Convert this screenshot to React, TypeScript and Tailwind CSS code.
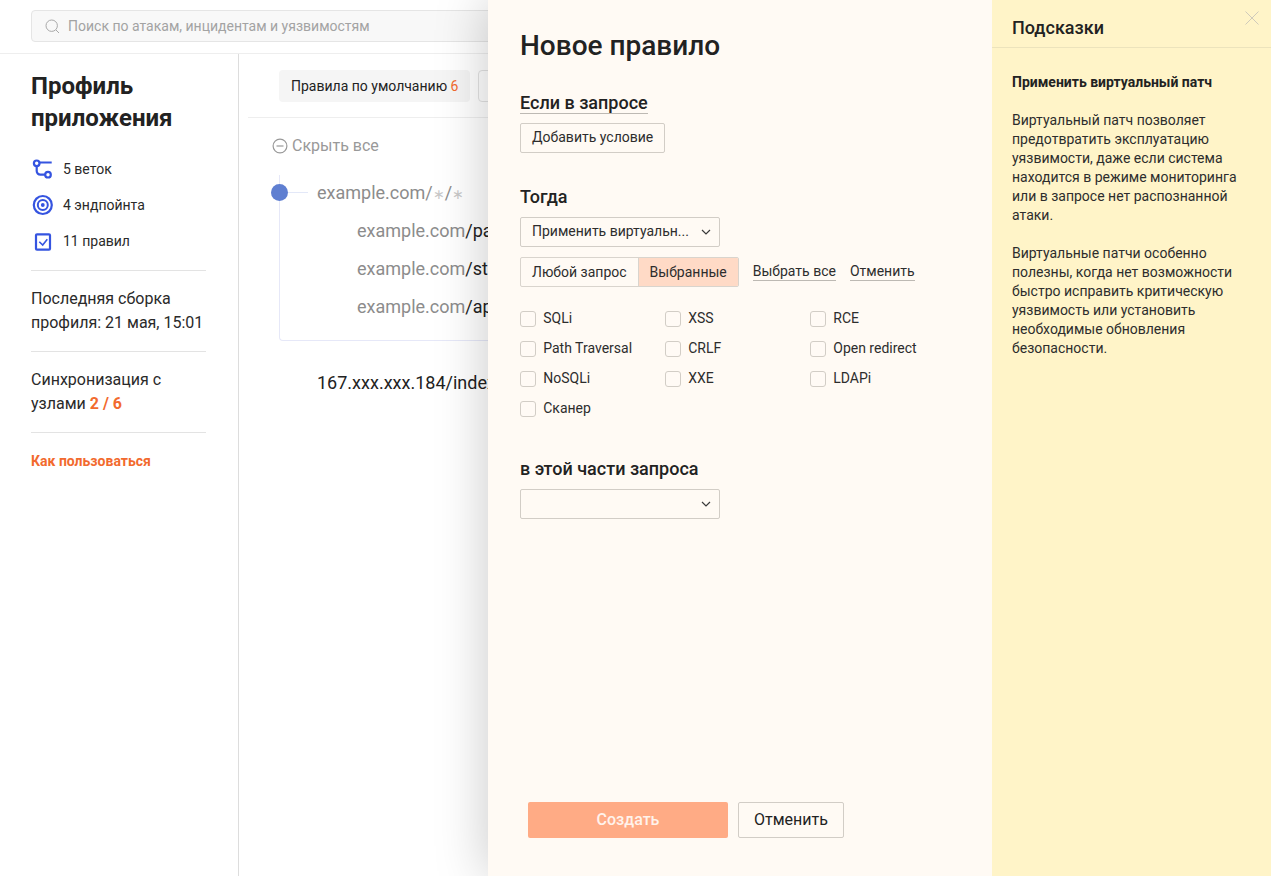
import React from "react";

const Chevron = () => (
  <svg width="10" height="6" viewBox="0 0 10 6" fill="none" className="shrink-0">
    <path d="M1 1l4 4 4-4" stroke="#3a3a3a" strokeWidth="1.2" />
  </svg>
);

const Check = ({ label }: { label: string }) => (
  <div className="flex h-[30px] items-center">
    <span className="mr-[7.25px] h-4 w-4 rounded-[3px] border border-[#d2cdc6] bg-[#fffaf5]" />
    <span className="text-[14px] leading-5 text-[#2d2d2d] relative top-[-1px]">{label}</span>
  </div>
);

const Stat = ({ icon, text }: { icon: React.ReactNode; text: string }) => (
  <div className="flex h-[36px] items-center">
    <span className="flex h-6 w-[32px] items-center">{icon}</span>
    <span className="text-[14px] text-[#2a2a2a]">{text}</span>
  </div>
);

const Url = ({ path }: { path: string }) => (
  <div className="h-[38px] pl-[77px] text-[18px] leading-[38px] text-[#8c8c8c] whitespace-nowrap">
    example.com<span className="text-[#222]">{path}</span>
  </div>
);

export default function App() {
  return (
    <div className="relative h-[876px] w-[1271px] overflow-hidden bg-white font-['Roboto',sans-serif] text-[#222]">
      <header className="flex h-[54px] items-start border-b border-[#eeeeee] pl-[31px] pt-[10px]">
        <div className="flex h-[32px] w-[700px] items-center rounded border border-[#e5e5e5] bg-[#f8f8f8] pl-[13px]">
          <svg width="15" height="15" viewBox="0 0 15 15" fill="none">
            <circle cx="6.7" cy="6.7" r="5.7" stroke="#a8a8a8" />
            <path d="M11 11l3 3" stroke="#a8a8a8" />
          </svg>
          <span className="ml-2 text-[14px] text-[#a3a3a3]">Поиск по атакам, инцидентам и уязвимостям</span>
        </div>
      </header>
      <div className="flex h-[822px]">
        <aside className="h-full w-[239px] shrink-0 border-r border-[#dddddd] pl-[31px] pr-[32px] pt-4">
          <h1 className="text-[24px] font-bold leading-8 text-[#222]">Профиль<br />приложения</h1>
          <div className="mt-[17px]">
            <Stat
              text="5 веток"
              icon={
                <svg width="22" height="24" viewBox="0 0 22 24" fill="none" stroke="#3554e0" strokeWidth="2.2">
                  <circle cx="5.7" cy="6.3" r="2.8" />
                  <circle cx="17" cy="17.7" r="2.8" />
                  <path d="M9 5.5H20.7M5.7 9.2V14a3.7 3.7 0 0 0 3.7 3.7H14" />
                </svg>
              }
            />
            <Stat
              text="4 эндпойнта"
              icon={
                <svg width="24" height="24" viewBox="0 0 24 24" fill="none" stroke="#3554e0">
                  <circle cx="11.8" cy="12" r="9" strokeWidth="2.2" />
                  <circle cx="11.8" cy="12" r="5" strokeWidth="2" />
                  <circle cx="11.8" cy="12" r="1.9" fill="#3554e0" stroke="none" />
                </svg>
              }
            />
            <Stat
              text="11 правил"
              icon={
                <svg width="22" height="24" viewBox="0 0 22 24" fill="none" stroke="#3554e0" strokeWidth="2.2">
                  <rect x="5" y="5.3" width="14" height="15.4" rx="1" />
                  <path d="M8.3 12.7l3.4 3.3 4.6-5.7" strokeWidth="1.6" />
                </svg>
              }
            />
          </div>
          <div className="mt-[11px] border-t border-[#e3e3e3] pb-[16px] pt-4 text-[16px] leading-6 text-[#2a2a2a]">
            Последняя сборка<br />профиля: 21 мая, 15:01
          </div>
          <div className="border-t border-[#e3e3e3] pb-[16px] pt-4 text-[16px] leading-6 text-[#2a2a2a]">
            Синхронизация с<br />узлами <b className="font-bold text-[#f26a2e]">2 / 6</b>
          </div>
          <div className="border-t border-[#e3e3e3] pt-[19px] text-[14px] font-bold leading-[18px] text-[#f26a2e]">
            Как пользоваться
          </div>
        </aside>
        <main className="min-w-0 flex-1 pl-[9px]">
          <div className="flex h-[64px] gap-2 border-b border-[#eeeeee] pl-[31px] pt-4">
            <div className="flex h-8 items-center rounded bg-[#f5f5f5] px-3 text-[14px] whitespace-nowrap text-[#222]">
              Правила по умолчанию&nbsp;<span className="text-[#f26a2e]">6</span>
            </div>
            <div className="h-8 w-[120px] rounded border border-[#e3e3e3]" />
          </div>
          <div className="flex h-[56px] items-center pl-[24px] text-[16px] text-[#999999]">
            <svg width="16" height="16" viewBox="0 0 16 16" fill="none" stroke="#999999" strokeWidth="1.2" className="mr-1">
              <circle cx="8" cy="8" r="6.9" />
              <path d="M4.5 8h7" />
            </svg>
            Скрыть все
          </div>
          <div className="relative ml-[31px] mt-[1px] h-[166px] w-[400px] rounded-bl border-b border-l border-[#e6e8f8]">
            <span className="absolute left-[-9px] top-[9px] h-[17px] w-[17px] rounded-full bg-[#5f7fd1]" />
            <span className="absolute left-[8px] top-[17px] h-px w-5 bg-[#e3e8f8]" />
            <div className="relative top-[-1px] h-[38px] pl-[37px] text-[18px] leading-[38px] text-[#8c8c8c] whitespace-nowrap">
              example.com/<span className="text-[14px] text-[#c8c8c8]">∗</span>/<span className="text-[14px] text-[#c8c8c8]">∗</span>
            </div>
            <div className="relative top-[-1px]">
              <Url path="/pages/" />
              <Url path="/static/" />
              <Url path="/api/" />
            </div>
          </div>
          <div className="ml-[69px] mt-[30px] text-[18px] leading-6 whitespace-nowrap text-[#222]">167.xxx.xxx.184/index</div>
        </main>
      </div>

      <div className="absolute right-0 top-0 flex h-full w-[783px] shadow-[0_0_50px_rgba(0,0,0,0.22)]">
        <section className="relative flex w-[504px] flex-col bg-[#fffaf4] pl-[32px]">
          <h2 className="mt-[28px] text-[28px] font-medium leading-9 text-[#222]">Новое правило</h2>
          <div className="mt-[28px] flex">
            <span className="border-b border-[#bdb9b3] text-[18px] font-medium leading-[21px] text-[#222]">Если в запросе</span>
          </div>
          <div className="mt-[9px] flex">
            <button className="h-[30px] rounded-[2px] border border-[#d2cdc6] px-[11px] pb-[2px] text-[14px] text-[#2d2d2d]">Добавить условие</button>
          </div>
          <h3 className="mt-[33px] text-[18px] font-medium leading-[22px] text-[#222]">Тогда</h3>
          <div className="mt-[9px] flex h-[30px] w-[200px] items-center justify-between rounded-[2px] border border-[#d2cdc6] pl-[11px] pr-2 text-[14px] text-[#2d2d2d]">
            <span className="relative top-[-1px]">Применить виртуальн...</span>
            <Chevron />
          </div>
          <div className="mt-[10px] flex h-[30px] items-center">
            <div className="flex h-[30px] overflow-hidden rounded-[2px] border border-[#d9d4cd] text-[14px] text-[#2d2d2d]">
              <span className="flex items-center border-r border-[#d9d4cd] px-[11px]">Любой запрос</span>
              <span className="flex items-center bg-[#ffdac6] px-[11px]">Выбранные</span>
            </div>
            <span className="ml-[14px] border-b border-[#bdb9b3] text-[14px] leading-[17px] text-[#2d2d2d]">Выбрать все</span>
            <span className="ml-[14px] border-b border-[#bdb9b3] text-[14px] leading-[17px] text-[#2d2d2d]">Отменить</span>
          </div>
          <div className="mt-[17px] grid w-[435px] grid-cols-[145px_145px_145px]">
            {["SQLi", "XSS", "RCE", "Path Traversal", "CRLF", "Open redirect", "NoSQLi", "XXE", "LDAPi", "Сканер"].map((l) => (
              <Check key={l} label={l} />
            ))}
          </div>
          <h3 className="mt-[34px] text-[18px] font-medium leading-[22px] text-[#222]">в этой части запроса</h3>
          <div className="mt-[9px] flex h-[30px] w-[200px] items-center justify-end rounded-[2px] border border-[#d2cdc6] pr-2">
            <Chevron />
          </div>
          <div className="mt-auto mb-[38px] ml-2 flex gap-[10px]">
            <button className="h-9 w-[200px] rounded-[2px] bg-[#ffab85] text-[16px] font-medium text-[#fff3ec]">Создать</button>
            <button className="h-9 w-[106px] rounded-[2px] border border-[#d2cdc6] text-[16px] text-[#222]">Отменить</button>
          </div>
        </section>
        <section className="relative w-[279px] bg-[#fff4c8]">
          <div className="flex h-[48px] items-center border-b border-[#ece3bc] pl-5 pt-[7px] text-[18px] font-medium text-[#222]">Подсказки</div>
          <svg width="14" height="14" viewBox="0 0 14 14" className="absolute right-[12px] top-[11px]" stroke="#cfcabb" fill="none">
            <path d="M.5.5l13 13M13.5.5l-13 13" />
          </svg>
          <div className="pl-5 pr-[30px] pt-[25px] text-[14px] leading-[19px] text-[#2d2d2d]">
            <p className="font-bold text-[#222]">Применить виртуальный патч</p>
            <p className="mt-[19px]">Виртуальный патч позволяет предотвратить эксплуатацию уязвимости, даже если система находится в режиме мониторинга или в запросе нет распознанной атаки.</p>
            <p className="mt-[19px]">Виртуальные патчи особенно полезны, когда нет возможности быстро исправить критическую уязвимость или установить необходимые обновления безопасности.</p>
          </div>
        </section>
      </div>
    </div>
  );
}
